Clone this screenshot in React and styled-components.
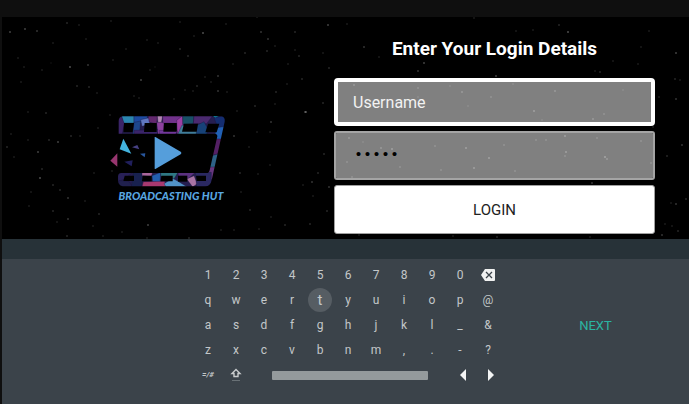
import React, { useState } from 'react';
import styled, { createGlobalStyle, css } from 'styled-components';

const GlobalStyle = createGlobalStyle`
  *, *::before, *::after { box-sizing: border-box; }
  body {
    margin: 0;
    background: #0f0f0f;
    font-family: Roboto, "Liberation Sans", sans-serif;
  }
  button, input { font: inherit; }
`;

const Page = styled.div`
  display: flex;
  flex-direction: column;
  min-height: 100vh;
  padding: 17px 0 0 2px;
`;

const Screen = styled.main`
  position: relative;
  display: grid;
  grid-template-columns: 332fr 321fr;
  padding: 0 34px 5px 0;
  background: #000;
`;

const Sky = styled.svg`
  position: absolute;
  inset: 0;
  width: 100%;
  height: 100%;
`;

const Brand = styled.div`
  position: relative;
  display: flex;
  flex-direction: column;
  align-items: center;
  justify-content: center;
  padding: 67px 0 0 6px;
`;

const Mark = styled.svg`
  display: block;
  width: 116px;
  height: 73px;
  margin-right: 6px;
`;

const BrandName = styled.div`
  color: #58a6e0;
  font: italic 900 11px/16px Lato, "Open Sans", sans-serif;
  white-space: nowrap;
`;

const Form = styled.form`
  position: relative;
  display: flex;
  flex-direction: column;
  gap: 5px;
`;

const Title = styled.h1`
  margin: 0;
  padding: 20px 0 12px;
  color: #fff;
  font-size: 19px;
  line-height: 24px;
  font-weight: 700;
  text-align: center;
`;

const Field = styled.input`
  width: 100%;
  height: 48px;
  padding: 0 15px;
  border: 4px solid #fff;
  border-radius: 4px;
  outline: none;
  background: rgba(255, 255, 255, 0.5);
  background-clip: padding-box;
  color: #fff;
  font-size: 16px;

  &::placeholder { color: #f2f2f2; opacity: 1; }

  ${({ $quiet }) => $quiet && css`
    height: 49px;
    padding: 0 18px;
    border: 2px solid #a4a4a4;
    border-radius: 3px;
    color: #000;
    font-family: "Liberation Mono", monospace;
    font-size: 15px;
  `}
`;

const LoginButton = styled.button`
  height: 49px;
  border: 1px solid #a0a0a0;
  border-radius: 3px;
  background: #fff;
  color: #222;
  font-size: 15px;
`;

const Suggestions = styled.div`
  height: 20px;
  background: #273238;
`;

const Keyboard = styled.section`
  flex: 1;
  display: grid;
  grid-template-columns: 1fr 308px 1fr;
  align-content: start;
  align-items: center;
  padding: 4px 0 16px 5px;
  background: #3b434a;
`;

const Keys = styled.div`
  grid-column: 2;
  display: grid;
  grid-template-columns: repeat(11, 28px);
  grid-auto-rows: 25px;
  justify-items: center;
`;

const Key = styled.button`
  display: flex;
  align-items: center;
  justify-content: center;
  width: 24px;
  height: 24px;
  padding: 0;
  border: 0;
  border-radius: 50%;
  background: ${({ $active }) => ($active ? '#565d63' : 'transparent')};
  color: #c3c7c9;
  font-size: ${({ $active }) => ($active ? '15px' : '12px')};
  line-height: 24px;
`;

const SymbolKey = styled(Key)`
  font-size: 8px;
  font-weight: 700;
  font-style: italic;
`;

const ArrowKey = styled(Key)`
  width: 28px;
  padding-left: 6px;
`;

const SpaceKey = styled.button`
  grid-column: span 7;
  width: 156px;
  height: 9px;
  margin-left: 4px;
  align-self: center;
  padding: 0;
  border: 0;
  border-radius: 1px;
  background: #949a9c;
`;

const NextButton = styled.button`
  justify-self: center;
  padding: 4px 8px;
  border: 0;
  background: none;
  color: #2bb5a3;
  font-size: 13px;
  line-height: 16px;
`;

const STARS = [
  [10, 32, 5], [25, 29, 5], [37, 31, 4], [67, 23, 3], [79, 25, 2], [111, 21, 2], [86, 39, 2], [53, 43, 2],
  [18, 58, 2], [24, 67, 2], [42, 70, 2], [70, 67, 6], [88, 65, 4], [51, 63, 1], [21, 82, 2], [77, 86, 3],
  [89, 87, 3], [97, 93, 2], [46, 113, 3], [28, 112, 2], [141, 80, 5], [126, 49, 2], [147, 40, 2], [158, 43, 2],
  [180, 22, 2], [203, 33, 6], [194, 36, 2], [180, 49, 3], [188, 56, 3], [150, 70, 2], [155, 67, 1], [113, 60, 2],
  [134, 96, 2], [139, 98, 2], [174, 99, 2], [185, 90, 2], [193, 91, 2], [197, 86, 3], [205, 77, 2], [218, 76, 4],
  [211, 82, 2], [218, 91, 4], [227, 92, 2], [233, 64, 2], [245, 53, 3], [261, 32, 4], [268, 39, 4], [267, 51, 3],
  [275, 46, 2], [295, 50, 2], [299, 56, 3], [295, 32, 3], [226, 24, 2], [257, 17, 2], [288, 64, 2], [323, 53, 2],
  [302, 79, 3], [276, 92, 3], [287, 84, 2], [306, 112, 6], [255, 106, 3], [237, 111, 2], [275, 104, 2], [328, 25, 5],
  [329, 68, 3], [323, 103, 3], [11, 134, 2], [7, 147, 3], [14, 157, 2], [28, 140, 2], [38, 152, 5], [49, 140, 3],
  [58, 142, 5], [71, 136, 3], [80, 136, 2], [42, 169, 3], [40, 178, 6], [53, 185, 3], [60, 190, 3], [31, 192, 2],
  [68, 198, 4], [68, 219, 4], [53, 211, 3], [29, 206, 2], [57, 222, 2], [85, 201, 2], [99, 214, 3], [94, 173, 2],
  [98, 128, 2], [110, 115, 2], [112, 171, 2], [67, 236, 3], [148, 225, 5], [122, 232, 2], [93, 226, 2],
  [234, 136, 4], [271, 122, 4], [257, 132, 2], [270, 132, 2], [249, 147, 2], [240, 173, 3], [258, 174, 2], [270, 165, 2],
  [312, 182, 4], [318, 173, 3], [324, 154, 3], [305, 112, 5], [329, 187, 4], [327, 211, 3], [310, 224, 3], [285, 225, 3],
  [271, 217, 2], [250, 210, 3], [241, 192, 2], [259, 229, 2], [234, 230, 2], [221, 230, 2], [313, 196, 2], [303, 185, 2],
  [568, 32, 6], [559, 25, 3], [516, 31, 2], [474, 18, 2], [347, 24, 2], [364, 47, 4], [424, 63, 5], [418, 71, 4],
  [379, 57, 2], [496, 76, 5], [533, 30, 2], [595, 71, 2], [600, 72, 3], [613, 61, 2], [649, 31, 2], [676, 53, 5],
  [675, 79, 3], [680, 80, 2], [676, 99, 4], [659, 97, 2], [641, 47, 2], [638, 64, 2], [653, 127, 2], [682, 145, 4],
  [354, 85, 4], [418, 88, 3], [462, 92, 4], [491, 97, 3], [513, 84, 2], [555, 91, 4], [534, 111, 5], [593, 119, 4],
  [604, 114, 3], [418, 97, 2], [450, 86, 2], [623, 90, 2], [468, 106, 2], [542, 120, 2],
  [349, 138, 4], [363, 142, 2], [381, 148, 4], [392, 149, 5], [435, 146, 3], [466, 148, 5], [489, 158, 5], [504, 145, 3],
  [536, 140, 3], [565, 136, 5], [597, 138, 3], [566, 152, 5], [565, 156, 3], [605, 157, 6], [607, 159, 4], [474, 168, 5],
  [441, 170, 3], [400, 167, 3], [347, 162, 3], [515, 171, 3], [641, 141, 3], [651, 163, 3], [546, 140, 3], [352, 177, 3],
  [592, 183, 4], [667, 156, 3], [676, 204, 4], [671, 203, 2], [686, 199, 3], [665, 224, 2], [662, 235, 4], [678, 231, 3],
  [672, 226, 2], [497, 237, 3], [590, 237, 2], [359, 235, 2], [453, 236, 2], [103, 236, 2], [147, 238, 2], [189, 238, 3],
];

const SHARDS = [
  ['66,46 104,46 104,68 72,68', '#2b86b0'], ['55,46 66,46 75,70 68,104 55,104', '#3b2468'],
  ['104,46 146,46 138,68 104,68', '#1d4aa0'], ['104,66 124,62 120,104 100,104', '#1d468c'],
  ['124,58 150,52 152,72 128,78', '#6077c0'], ['146,46 174,46 172,70 150,66', '#63286e'],
  ['174,46 190,46 186,68 176,68', '#b387b3'], ['172,66 194,66 194,104 176,104', '#8d419f'],
  ['190,46 250,46 244,70 190,68', '#71328b'], ['232,60 250,46 252,82 234,104', '#9c40a4'],
  ['250,46 284,46 282,70 250,72', '#185066'], ['248,74 270,80 295,92 292,104 234,104', '#407d9a'],
  ['284,46 340,46 322,70 282,70', '#4b2a70'], ['294,74 314,64 328,90 320,104 290,104', '#174278'],
  ['340,46 360,46 348,54', '#14a9c8'], ['344,52 378,46 382,84 356,84', '#142d70'],
  ['104,90 176,88 174,104 104,104', '#3a246a'], ['180,90 234,92 228,104 180,104', '#71379a'],
  ['350,82 380,78 368,118 346,116', '#2160b5'], ['340,116 370,116 360,160 334,166', '#542064'],
  ['330,168 360,160 350,206 328,206', '#2d6187'], ['320,200 355,200 342,236 316,244', '#67377f'],
  ['55,216 100,216 76,236 55,244', '#282057'], ['58,240 90,244 100,260 60,260', '#20204d'],
  ['102,216 132,216 126,260 96,260', '#18214f'], ['128,216 160,216 156,228 128,226', '#a9669b'],
  ['158,226 184,216 182,248 160,244', '#235fae'], ['132,244 196,243 200,260 128,260', '#a83970'],
  ['184,216 236,216 224,236 184,228', '#2f7884'], ['194,250 220,234 238,244 264,260 200,260', '#5193c7'],
  ['236,216 288,216 264,238 238,236', '#5b3180'], ['262,236 284,226 294,250 280,260', '#a974a5'],
  ['288,216 336,216 336,260 292,260', '#2a2861'],
];

const HOLES = [
  'M74 68h30l-4 28H72z', 'M136 68h36v27h-38z', 'M194 68h38v26h-40z', 'M254 70h42l-4 24h-44z', 'M326 70h34l-8 26h-34z',
  'M76 226h28v16H72z', 'M130 226h27v17h-29z', 'M186 226h34v17h-36z', 'M236 226h28v18h-28z', 'M290 226h30v16h-28z',
];

const ROWS = ['1234567890', 'qwertyuiop@', 'asdfghjkl_&', 'zxcvbnm,.-?'];

function Stars() {
  return (
    <Sky viewBox="2 17 687 222" preserveAspectRatio="xMidYMid slice" aria-hidden="true">
      {STARS.map(([x, y, level], i) => (
        <circle key={i} cx={x} cy={y} r="1" fill="#fff" opacity={level / 20} />
      ))}
    </Sky>
  );
}

function Logo() {
  return (
    <Mark viewBox="32 44 348 219" aria-hidden="true">
      <mask id="film">
        <path fill="#fff" d="M70 48H366Q378 50 376 64L337 240Q333 258 318 258H70Q55 254 56 240V228Q57 218 66 218H325Q330 216 331 210L354 108Q354 100 346 100H58V62Q58 50 70 48Z" />
        {HOLES.map((d) => <path key={d} d={d} fill="#000" />)}
      </mask>
      <g mask="url(#film)">
        <rect x="50" y="44" width="334" height="218" fill="#251e50" />
        {SHARDS.map(([points, fill]) => (
          <polygon key={points} points={points} fill={fill} stroke="#171238" strokeWidth="1" />
        ))}
      </g>
      <path fill="#559edb" d="M166 110q3-1 6 2l72 42q5 4 0 8l-72 42q-4 3-6 1z" />
      <path fill="#43b4df" d="M72 115L96 160L61 147Z" />
      <path fill="#98366f" d="M54 159V199L33 181Z" />
      <path fill="#464083" d="M98 141L114 134L120 147Z" />
      <path fill="#28579e" d="M122 160L138 159L136 171Z" />
      <path fill="#201f5c" d="M75 184L100 180L97 198Z" />
    </Mark>
  );
}

function Backspace() {
  return (
    <svg width="14" height="12" viewBox="0 0 14 12" aria-hidden="true">
      <path fill="#f0f1f1" d="M4 0H13Q14 0 14 1V11Q14 12 13 12H4L0 6Z" />
      <path stroke="#3b434a" strokeWidth="1.3" d="M5 3L11 9M11 3L5 9" />
    </svg>
  );
}

function Shift() {
  return (
    <svg width="12" height="14" viewBox="0 0 12 14" aria-hidden="true">
      <path fill="none" stroke="#c9cccd" strokeWidth="1.4" d="M6 1.500L10 5.500H8V8.500H4V5.500H2Z" />
      <path stroke="#697176" d="M2 12.500H10" />
    </svg>
  );
}

function Arrow({ d }) {
  return (
    <svg width="6" height="12" viewBox="0 0 6 12" aria-hidden="true">
      <path fill="#f3f4f4" d={d} />
    </svg>
  );
}

export default function App() {
  const [username, setUsername] = useState('');
  const [password, setPassword] = useState('admin');

  return (
    <>
      <GlobalStyle />
      <Page>
        <Screen>
          <Stars />
          <Brand>
            <Logo />
            <BrandName>BROADCASTING HUT</BrandName>
          </Brand>
          <Form onSubmit={(e) => e.preventDefault()}>
            <Title>Enter Your Login Details</Title>
            <Field
              aria-label="Username"
              placeholder="Username"
              value={username}
              onChange={(e) => setUsername(e.target.value)}
            />
            <Field
              $quiet
              type="password"
              aria-label="Password"
              value={password}
              onChange={(e) => setPassword(e.target.value)}
            />
            <LoginButton type="submit">LOGIN</LoginButton>
          </Form>
        </Screen>
        <Suggestions />
        <Keyboard aria-label="Keyboard">
          <Keys>
            {ROWS.map((row, i) => (
              <React.Fragment key={row}>
                {[...row].map((char) => (
                  <Key key={char} type="button" $active={char === 't'}>{char}</Key>
                ))}
                {i === 0 && <Key type="button" aria-label="Backspace"><Backspace /></Key>}
              </React.Fragment>
            ))}
            <SymbolKey type="button">=/#</SymbolKey>
            <Key type="button" aria-label="Shift"><Shift /></Key>
            <SpaceKey type="button" aria-label="Space" />
            <ArrowKey type="button" aria-label="Move left"><Arrow d="M6 0V12L0 6Z" /></ArrowKey>
            <ArrowKey type="button" aria-label="Move right"><Arrow d="M0 0V12L6 6Z" /></ArrowKey>
          </Keys>
          <NextButton type="button">NEXT</NextButton>
        </Keyboard>
      </Page>
    </>
  );
}
